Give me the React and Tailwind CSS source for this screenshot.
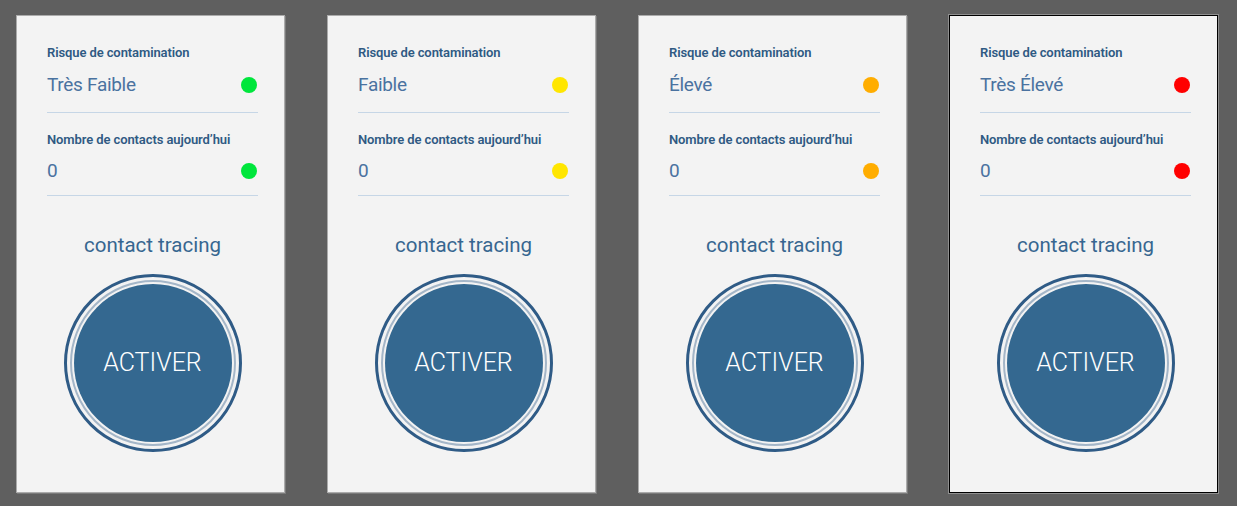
import React from "react";

const cards = [
  { risk: "Très Faible", dot: "bg-[#00e63c]", selected: false },
  { risk: "Faible", dot: "bg-[#ffe600]", selected: false },
  { risk: "Élevé", dot: "bg-[#ffad00]", selected: false },
  { risk: "Très Élevé", dot: "bg-[#ff0000]", selected: true },
];

function Card({ risk, dot, selected }) {
  return (
    <div
      className={
        "w-[269px] h-[478px] shrink-0 bg-[#f3f3f3] pl-[30px] pr-[26px] pt-[29px] border " +
        (selected
          ? "border-black shadow-[0_0_0_1px_#8f8f8f]"
          : "border-[#ababab] shadow-[1px_1px_0_0_#7a7a7a]")
      }
    >
      <div className="h-[16px] text-[13px] leading-[16px] font-semibold text-[#2f5a83] tracking-[-0.1px]">
        Risque de contamination
      </div>
      <div className="mt-[8px] h-[32px] flex items-center justify-between">
        <span className="text-[19px] leading-[32px] tracking-[-0.3px] text-[#4a72a0]">{risk}</span>
        <span className={"w-[16px] h-[16px] rounded-full mr-[1px] " + dot}></span>
      </div>
      <div className="mt-[11px] h-px bg-[#c6d6e6]"></div>
      <div className="mt-[19px] h-[16px] text-[13px] leading-[16px] font-semibold text-[#2f5a83] tracking-[-0.1px]">
        Nombre de contacts aujourd’hui
      </div>
      <div className="mt-[7px] h-[32px] flex items-center justify-between">
        <span className="text-[19px] leading-[32px] text-[#4a72a0]">0</span>
        <span className={"w-[16px] h-[16px] rounded-full mr-[1px] " + dot}></span>
      </div>
      <div className="mt-[8px] h-px bg-[#c6d6e6]"></div>
      <div className="mt-[35px] text-center text-[20.5px] leading-[28px] text-[#376690]">
        contact tracing
      </div>
      <div className="mt-[15px] flex justify-center">
        <div className="w-[178px] h-[178px] rounded-full border-[3px] border-[#2f5b86] p-[3px]">
          <div className="w-full h-full rounded-full border-2 border-[#a4b6c8] p-[2px]">
            <div className="w-full h-full rounded-full bg-[#346890] flex items-center justify-center text-white text-[25px] font-light">
              ACTIVER
            </div>
          </div>
        </div>
      </div>
    </div>
  );
}

export default function App() {
  return (
    <div
      className="w-[1237px] h-[506px] bg-[#5f5f5f] flex gap-[42px] pl-[16px] pt-[15px]"
      style={{ fontFamily: "Roboto, 'Noto Sans', sans-serif" }}
    >
      {cards.map((c) => (
        <Card key={c.risk} {...c} />
      ))}
    </div>
  );
}
